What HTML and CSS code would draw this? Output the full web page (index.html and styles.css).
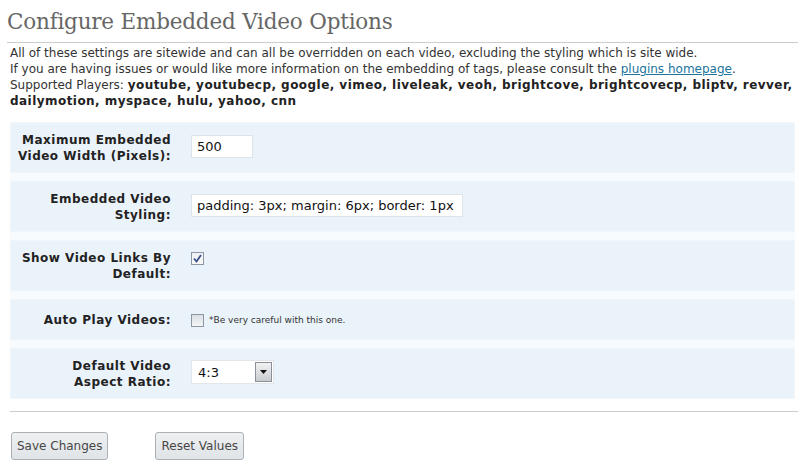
FILE: index.html
```html
<!DOCTYPE html>
<html>
<head>
<meta charset="utf-8">
<link rel="stylesheet" href="styles.css">
</head>
<body>
<div class="wrap">
  <h2 class="title">Configure Embedded Video Options</h2>
  <div class="intro">
    <p>All of these settings are sitewide and can all be overridden on each video, excluding the styling which is site wide.</p>
    <p>If you are having issues or would like more information on the embedding of tags, please consult the <a href="#">plugins homepage</a>.</p>
    <p>Supported Players: <b>youtube, youtubecp, google, vimeo, liveleak, veoh, brightcove, brightcovecp, bliptv, revver, dailymotion, myspace, hulu, yahoo, cnn</b></p>
  </div>
  <div class="options">
    <div class="row">
      <div class="label">Maximum Embedded<br>Video Width (Pixels):</div>
      <div class="field"><span class="input w-small">500</span></div>
    </div>
    <div class="row">
      <div class="label">Embedded Video<br>Styling:</div>
      <div class="field"><span class="input w-wide">padding: 3px; margin: 6px; border: 1px</span></div>
    </div>
    <div class="row">
      <div class="label">Show Video Links By<br>Default:</div>
      <div class="field"><span class="check checked"><svg width="9" height="9" viewBox="0 0 9 9"><path d="M1 4.5 L3.5 7.5 L8 1" fill="none" stroke="#3b4f8a" stroke-width="1.8"/></svg></span></div>
    </div>
    <div class="row row-single">
      <div class="label">Auto Play Videos:</div>
      <div class="field field-inline"><span class="check"></span><span class="note">*Be very careful with this one.</span></div>
    </div>
    <div class="row">
      <div class="label">Default Video<br>Aspect Ratio:</div>
      <div class="field"><span class="select"><span class="select-value">4:3</span><span class="select-btn"><svg width="7" height="4" viewBox="0 0 7 4"><path d="M0 0 L7 0 L3.5 4 Z" fill="#111"/></svg></span></span></div>
    </div>
  </div>
  <div class="bottom-rule"></div>
  <div class="buttons">
    <button class="btn">Save Changes</button>
    <button class="btn">Reset Values</button>
  </div>
</div>
</body>
</html>
```

FILE: styles.css
```css
html, body {
  margin: 0;
  padding: 0;
  background: #fff;
}
.wrap {
  padding: 0 7px 0 7px;
  font-family: "DejaVu Sans", Verdana, sans-serif;
  font-size: 12px;
  color: #333;
}
.title {
  margin: 0;
  padding: 7px 0 0 0;
  height: 35px;
  font-family: "DejaVu Serif", Georgia, serif;
  font-weight: normal;
  font-size: 21.5px;
  letter-spacing: -0.2px;
  line-height: 30px;
  color: #666;
  border-bottom: 1px solid #ccc;
}
.intro {
  padding: 2px 0 0 3px;
  line-height: 16px;
  color: #333;
}
.intro p {
  margin: 0;
}
.intro b {
  color: #222;
  letter-spacing: 0.45px;
}
.intro a {
  color: #21759b;
}
.options {
  margin: 13px 3px 0 3px;
  display: flex;
  flex-direction: column;
  gap: 8px;
  background: #f8fbfd;
}
.row {
  display: grid;
  grid-template-columns: 160px 1fr;
  background: #eaf2fa;
  padding: 9px 0 8px 0;
  border: 1px solid #f1f6fb;
}
.row-single {
  padding: 12px 0 11px 0;
}
.label {
  font-weight: bold;
  text-align: right;
  line-height: 16px;
  letter-spacing: 0.5px;
  color: #222;
  white-space: nowrap;
}
.field {
  padding-left: 20px;
  display: flex;
  align-items: flex-start;
}
.input {
  display: inline-block;
  box-sizing: border-box;
  height: 23px;
  line-height: 21px;
  padding: 0 5px;
  font-size: 13px;
  background: #fff;
  border: 1px solid #dfe3e8;
  color: #111;
  white-space: nowrap;
  overflow: hidden;
  margin-top: 3px;
}
.w-small { width: 62px; }
.w-wide { width: 272px; }
.check {
  display: inline-flex;
  align-items: center;
  justify-content: center;
  box-sizing: border-box;
  width: 13px;
  height: 13px;
  border: 1px solid #8e98a4;
  background: linear-gradient(#dcdfe3, #f4f5f6);
  margin-top: 2px;
}
.checked {
  background: linear-gradient(#eef0f2, #fafafa);
}
.field-inline {
  align-items: center;
}
.field-inline .check {
  margin-top: 0;
}
.note {
  font-size: 9px;
  margin-left: 5px;
  color: #333;
}
.select {
  display: inline-flex;
  align-items: center;
  box-sizing: border-box;
  width: 83px;
  height: 24px;
  background: #fff;
  border: 1px solid #e2e6ea;
  margin-top: 2px;
  padding: 0 1px 0 6px;
  font-size: 13px;
}
.select-value {
  flex: 1;
  color: #111;
}
.select-btn {
  box-sizing: border-box;
  width: 17px;
  height: 20px;
  border: 1px solid #8a9099;
  background: linear-gradient(#f2f2f2, #c8ccd0);
  display: flex;
  align-items: center;
  justify-content: center;
}
.bottom-rule {
  margin: 12px 0 0 3px;
  border-top: 1px solid #ccc;
}
.buttons {
  display: flex;
  gap: 47px;
  padding: 20px 0 0 4px;
}
.btn {
  box-sizing: border-box;
  height: 28px;
  padding: 0 5px;
  font-family: "DejaVu Sans", Verdana, sans-serif;
  font-size: 12px;
  color: #464646;
  background: linear-gradient(#eef0f1, #e0e4e7);
  border: 1px solid #a9b1b7;
  border-radius: 3px;
}
```
